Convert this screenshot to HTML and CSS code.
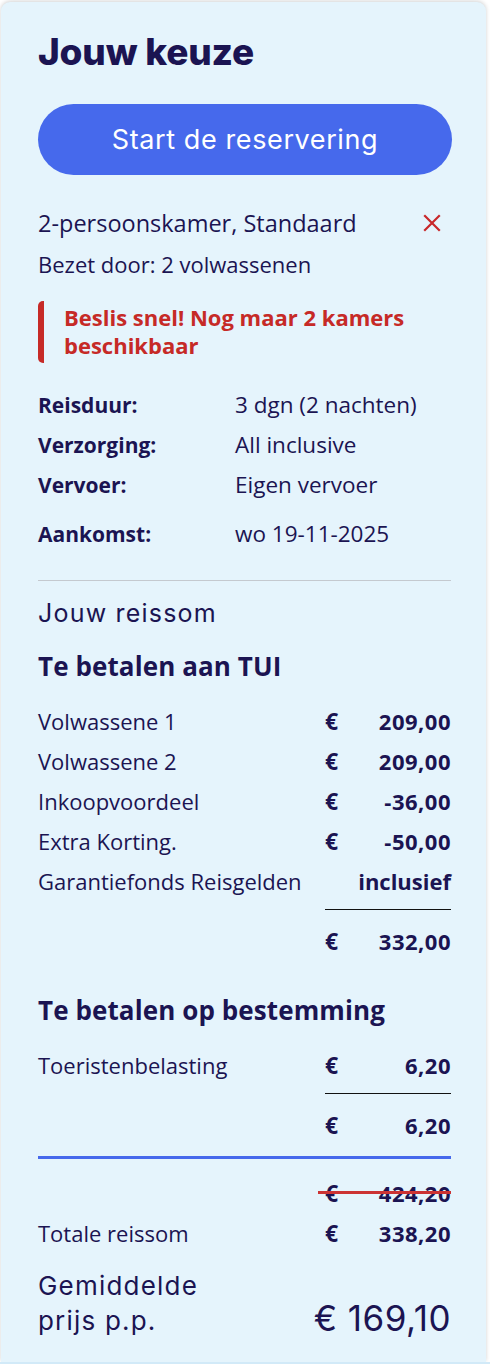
FILE: index.html
```html
<!DOCTYPE html>
<html lang="nl">
<head>
<meta charset="utf-8">
<title>Jouw keuze</title>
<link rel="stylesheet" href="styles.css">
</head>
<body>
<div class="page">
  <aside class="card">
    <h1 class="title">Jouw keuze</h1>
    <button class="cta" type="button">Start de reservering</button>

    <div class="room">
      <div class="room-name">2-persoonskamer, Standaard</div>
      <button class="remove" type="button" aria-label="Verwijderen">
        <svg width="18" height="18" viewBox="0 0 18 18"><path d="M2 2 L16 16 M16 2 L2 16" stroke="#c8282b" stroke-width="2.2" fill="none" stroke-linecap="square"/></svg>
      </button>
    </div>
    <div class="occupancy">Bezet door: 2 volwassenen</div>

    <div class="alert">Beslis snel! Nog maar 2 kamers beschikbaar</div>

    <dl class="details">
      <dt>Reisduur:</dt><dd>3 dgn (2 nachten)</dd>
      <dt>Verzorging:</dt><dd>All inclusive</dd>
      <dt>Vervoer:</dt><dd>Eigen vervoer</dd>
      <dt class="gap">Aankomst:</dt><dd class="gap">wo 19-11-2025</dd>
    </dl>

    <hr class="divider">

    <div class="sum-title">Jouw reissom</div>

    <h2 class="section">Te betalen aan TUI</h2>
    <div class="prices">
      <span class="lbl">Volwassene 1</span><span class="cur">€</span><span class="amt">209,00</span>
      <span class="lbl">Volwassene 2</span><span class="cur">€</span><span class="amt">209,00</span>
      <span class="lbl">Inkoopvoordeel</span><span class="cur">€</span><span class="amt">-36,00</span>
      <span class="lbl">Extra Korting.</span><span class="cur">€</span><span class="amt">-50,00</span>
      <span class="lbl">Garantiefonds Reisgelden</span><span class="incl">inclusief</span>
      <span class="rule"></span>
      <span class="lbl"></span><span class="cur">€</span><span class="amt">332,00</span>
    </div>

    <h2 class="section second">Te betalen op bestemming</h2>
    <div class="prices">
      <span class="lbl">Toeristenbelasting</span><span class="cur">€</span><span class="amt">6,20</span>
      <span class="rule"></span>
      <span class="lbl"></span><span class="cur">€</span><span class="amt">6,20</span>
    </div>

    <div class="blue-rule"></div>

    <div class="prices totals">
      <span class="lbl"></span><span class="old"><span class="cur">€</span><span class="amt">424,20</span></span>
      <span class="lbl">Totale reissom</span><span class="cur">€</span><span class="amt">338,20</span>
    </div>

    <div class="avg">
      <div class="avg-lbl">Gemiddelde<br>prijs p.p.</div>
      <div class="avg-val">€ 169,10</div>
    </div>
  </aside>
  <div class="below"></div>
</div>
</body>
</html>
```

FILE: styles.css
```css
* { box-sizing: border-box; }

html, body {
  margin: 0;
  padding: 0;
  background: #ffffff;
}

body {
  font-family: "Open Sans", "Noto Sans", sans-serif;
  color: #1b1452;
}

.page {
  width: 490px;
  padding-top: 2px;
}

.card {
  display: block;
  margin-left: 1px;
  width: 485px;
  background: #e5f4fc;
  border-radius: 9px 9px 0 0;
  box-shadow: 0 -1px 4px rgba(0, 0, 0, 0.18);
  padding: 27px 35px 24px 37px;
}

.below {
  height: 8px;
  background: #d2eaf8;
}

.title {
  margin: 0;
  font-family: Inter, sans-serif;
  font-weight: 800;
  font-size: 37px;
  line-height: 46px;
  letter-spacing: -0.2px;
  color: #1b1452;
}

.cta {
  display: block;
  width: 414px;
  height: 71px;
  margin: 29px 0 0 0;
  border: 0;
  border-radius: 36px;
  background: #4669ec;
  color: #ffffff;
  font-family: Inter, sans-serif;
  font-size: 27px;
  font-weight: 400;
  letter-spacing: 0.6px;
}

.room {
  display: flex;
  justify-content: space-between;
  align-items: center;
  margin-top: 33px;
  padding-right: 10px;
}

.room-name {
  font-size: 23.5px;
  line-height: 30px;
}

.remove {
  border: 0;
  background: none;
  padding: 0;
  width: 18px;
  height: 18px;
  display: flex;
}

.occupancy {
  margin-top: 12px;
  font-size: 22px;
  line-height: 28px;
}

.alert {
  margin-top: 23px;
  border-left: 6px solid #c62a27;
  border-radius: 5px 0 0 5px;
  padding: 2px 40px 4px 20px;
  color: #c62a27;
  font-weight: 700;
  font-size: 22px;
  line-height: 28px;
}

.details {
  display: grid;
  grid-template-columns: 197px 1fr;
  row-gap: 12px;
  margin: 28px 0 0 0;
  font-size: 21px;
  line-height: 28px;
}

.details dt {
  font-weight: 700;
  margin: 0;
}

.details dd {
  margin: 0;
  font-size: 22.5px;
}

.details .gap {
  margin-top: 9px;
}

.divider {
  margin: 32px 0 0 0;
  border: 0;
  border-top: 1px solid #c4c9cf;
}

.sum-title {
  margin-top: 17px;
  font-family: Inter, sans-serif;
  font-size: 25px;
  line-height: 30px;
  letter-spacing: 1.2px;
}

.section {
  margin: 22px 0 0 0;
  font-size: 26px;
  line-height: 32px;
  font-weight: 700;
  letter-spacing: 0.1px;
}

.section.second {
  margin-top: 39px;
}

.prices {
  display: grid;
  grid-template-columns: 1fr 40px 86px;
  row-gap: 12px;
  margin-top: 25px;
  font-size: 22px;
  line-height: 28px;
}

.prices .cur,
.prices .amt,
.prices .incl {
  font-weight: 700;
}

.prices .cur {
  font-size: 23px;
}

.prices .amt {
  letter-spacing: 0.5px;
}

.prices .amt,
.prices .incl {
  text-align: right;
}

.prices .incl {
  grid-column: 2 / 4;
}

.prices .rule {
  grid-column: 2 / 4;
  height: 1px;
  background: #111111;
  margin: 2px 0 5px 0;
}

.blue-rule {
  height: 3px;
  background: #4669ec;
  margin-top: 17px;
}

.totals {
  margin-top: 20px;
}

.old {
  grid-column: 2 / 4;
  display: grid;
  grid-template-columns: 40px 86px;
  position: relative;
}

.old::after {
  content: "";
  position: absolute;
  left: -7px;
  right: 0;
  top: 12px;
  height: 3px;
  background: #cc3333;
}

.avg {
  display: flex;
  justify-content: space-between;
  align-items: flex-end;
  margin-top: 21px;
}

.avg-lbl {
  font-family: Inter, sans-serif;
  font-size: 26px;
  line-height: 35px;
  letter-spacing: 1.2px;
}

.avg-val {
  font-family: Inter, sans-serif;
  font-size: 35px;
  line-height: 40px;
  letter-spacing: 0.5px;
}
```
